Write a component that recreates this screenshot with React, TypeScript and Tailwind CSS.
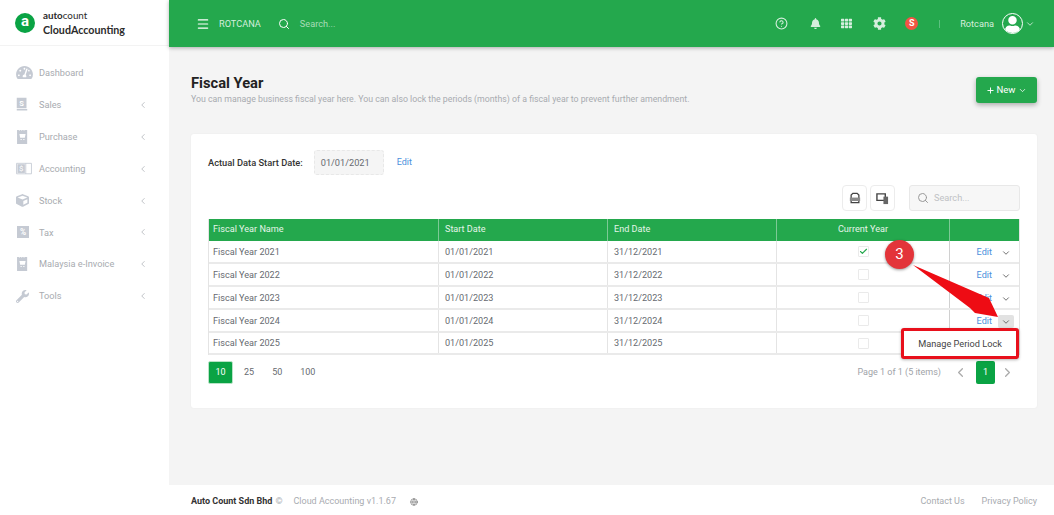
import { ChevronDown, ChevronLeft, ChevronRight, Check, CircleHelp, Globe, Menu, Plus, Search } from "lucide-react";
import { FaBell, FaCog, FaCube, FaTachometerAlt, FaTh, FaUser, FaWrench } from "react-icons/fa";

const SalesIcon = () => (
  <svg viewBox="0 0 16 18" className="w-[12px] h-[15px]">
    <path d="M1 0h13v14H1z" fill="#c5cad3" />
    <path d="M1 15h14v2H1z" fill="#c5cad3" />
    <text x="7.5" y="11" fontSize="10" fontWeight="700" textAnchor="middle" fill="#fff" fontFamily="Roboto, sans-serif">S</text>
  </svg>
);

const ReceiptIcon = () => (
  <svg viewBox="0 0 14 18" className="w-[11px] h-[14px] ml-[1px]">
    <path d="M0 0h2l1 1 1-1h1l1 1 1-1h1l1 1 1-1h1l2 0v18H0z" fill="#c5cad3" />
    <path d="M3 5h8l-1 5H4zM4.500 11.500h1.500v1.500H4.500zM8 11.500h1.500v1.500H8z" fill="#fff" />
  </svg>
);

const AccountingIcon = () => (
  <svg viewBox="0 0 18 16" className="w-[16px] h-[14px]" fill="none" stroke="#c5cad3">
    <path d="M.5 1.500h17v12H.5zM11 1.500v12" strokeWidth="1" />
    <path d="M1.500 2.500h8.500v10H1.500z" fill="#c5cad3" stroke="none" />
    <text x="5.700" y="10.500" fontSize="9" textAnchor="middle" fill="#fff" stroke="none" fontFamily="Roboto, sans-serif">$</text>
  </svg>
);

const TaxIcon = () => (
  <svg viewBox="0 0 13 13" className="w-[12px] h-[12px] ml-[1px]">
    <path d="M0 0h13v13H0z" fill="#c5cad3" />
    <text x="6.500" y="10" fontSize="9" fontWeight="700" textAnchor="middle" fill="#fff" fontFamily="Roboto, sans-serif">%</text>
  </svg>
);

const navItems = [
  { label: "Dashboard", icon: <FaTachometerAlt className="w-[17px] h-[15px] text-[#c5cad3]" /> },
  { label: "Sales", icon: <SalesIcon />, arrow: true },
  { label: "Purchase", icon: <ReceiptIcon />, arrow: true },
  { label: "Accounting", icon: <AccountingIcon />, arrow: true },
  { label: "Stock", icon: <FaCube className="w-[13px] h-[13px] text-[#c5cad3]" />, arrow: true },
  { label: "Tax", icon: <TaxIcon />, arrow: true },
  { label: "Malaysia e-Invoice", icon: <ReceiptIcon />, arrow: true },
  { label: "Tools", icon: <FaWrench className="w-[13px] h-[13px] text-[#c5cad3]" />, arrow: true },
];

const rows = [
  { name: "Fiscal Year 2021", start: "01/01/2021", end: "31/12/2021", current: true, h: "h-[23px]" },
  { name: "Fiscal Year 2022", start: "01/01/2022", end: "31/12/2022", h: "h-[23px]" },
  { name: "Fiscal Year 2023", start: "01/01/2023", end: "31/12/2023", h: "h-[23px]" },
  { name: "Fiscal Year 2024", start: "01/01/2024", end: "31/12/2024", open: true, h: "h-[23px]" },
  { name: "Fiscal Year 2025", start: "01/01/2025", end: "31/12/2025", noAction: true, h: "h-[22px]" },
];

const Sidebar = () => (
  <aside className="w-[169px] shrink-0 bg-white flex flex-col">
    <div className="h-[46px] border-b border-[#f3f3f3] flex items-center pl-[15px] gap-[8px]">
      <div className="w-[20px] h-[20px] rounded-full bg-[#0aa344] flex items-center justify-center text-white text-[15px] font-bold leading-none pb-[2px]">a</div>
      <div className="text-[#2b2b2b] leading-none">
        <div className="text-[9.800px] font-['Lato',sans-serif] font-bold leading-[10px] mb-[3px]">
          auto<span className="font-normal">count</span>
        </div>
        <div className="text-[10.700px] font-bold font-['Lato',sans-serif] leading-[13px]">CloudAccounting</div>
      </div>
    </div>
    <nav className="pt-[11px]">
      {navItems.map((item) => (
        <div key={item.label} className="h-[31.900px] flex items-center pl-[16px] pr-[21px] text-[#a8abb0] text-[9.200px]">
          <span className="w-[23px] shrink-0 flex">{item.icon}</span>
          <span className="flex-1">{item.label}</span>
          {item.arrow && <ChevronLeft className="w-[10px] h-[10px] text-[#b5b8bd]" />}
        </div>
      ))}
    </nav>
  </aside>
);

const Topbar = () => (
  <header className="h-[47px] shrink-0 bg-[#24a84d] shadow-[0_1px_4px_rgba(0,0,0,0.3)] flex items-center text-[#d5eedd] text-[9.200px] pl-[27px] pr-[19px] relative z-10">
    <Menu className="w-[14px] h-[14px] text-white" />
    <span className="ml-[9px]">ROTCANA</span>
    <Search className="w-[12px] h-[12px] ml-[17px] text-white" />
    <span className="ml-[10px] text-[#a8dcb8]">Search...</span>
    <div className="ml-auto flex items-center">
      <CircleHelp className="w-[13px] h-[13px]" />
      <FaBell className="w-[11px] h-[11px] ml-[22px]" />
      <FaTh className="w-[11px] h-[11px] ml-[20px]" />
      <FaCog className="w-[13px] h-[13px] ml-[21px]" />
      <div className="w-[13px] h-[13px] ml-[19px] rounded-full bg-[#f25444] text-white text-[9px] font-bold flex items-center justify-center">S</div>
      <div className="w-px h-[8px] ml-[21px] bg-[#5cc080]" />
      <span className="ml-[20px]">Rotcana</span>
      <div className="w-[21px] h-[21px] ml-[8px] rounded-full border border-white bg-[#24a84d] overflow-hidden flex items-end justify-center">
        <FaUser className="w-[17px] h-[17px] text-white" />
      </div>
      <ChevronDown className="w-[10px] h-[10px] ml-[2px]" />
    </div>
  </header>
);

const FiscalTable = () => (
  <div className="mt-[8px] border-x border-[#e4e4e4] text-[9.100px] text-[#666a70]">
    <div className="h-[22px] bg-[#24a84d] text-[#e4f5e9] flex">
      <div className="w-[230px] pl-[4px] flex items-center border-r border-[#7dc996]">Fiscal Year Name</div>
      <div className="w-[169px] pl-[6px] flex items-center border-r border-[#7dc996]">Start Date</div>
      <div className="w-[169px] pl-[6px] flex items-center border-r border-[#7dc996]">End Date</div>
      <div className="w-[173px] flex items-center justify-center border-r border-[#7dc996]">Current Year</div>
      <div className="flex-1" />
    </div>
    {rows.map((row) => (
      <div key={row.name} className={`${row.h} flex border-b-2 border-[#eaeaea]`}>
        <div className="w-[230px] pl-[4px] pt-[2px] flex items-center border-r border-[#e4e4e4]">{row.name}</div>
        <div className="w-[169px] pl-[6px] pt-[2px] flex items-center border-r border-[#e4e4e4]">{row.start}</div>
        <div className="w-[169px] pl-[6px] pt-[2px] flex items-center border-r border-[#e4e4e4]">{row.end}</div>
        <div className="w-[173px] flex items-center justify-center border-r border-[#d0d0d0]">
          <div className="w-[11px] h-[11px] border border-[#eaeaea] rounded-[1px] flex items-center justify-center">
            {row.current && <Check className="w-[9px] h-[9px] text-[#24a84d]" strokeWidth={3} />}
          </div>
        </div>
        {!row.noAction && (
          <div className="flex-1 flex items-center justify-end pr-[5px] pt-[2px]">
            <span className="text-[#4a8fdc] mr-[6px]">Edit</span>
            <div className={`w-[16px] h-[13px] rounded-[2px] flex items-center justify-center ${row.open ? "bg-[#e2e2e2]" : ""}`}>
              <ChevronDown className="w-[10px] h-[10px] text-[#555]" />
            </div>
          </div>
        )}
      </div>
    ))}
  </div>
);

const App = () => {
  return (
    <div className="relative w-[1054px] h-[515px] overflow-hidden flex bg-[#f4f4f4] font-['Roboto',sans-serif]">
      <Sidebar />
      <div className="flex-1 flex flex-col min-w-0">
        <Topbar />
        <main className="flex-1 pl-[22px] pr-[17px] pt-[27px]">
          <div className="flex items-start justify-between">
            <div>
              <h1 className="text-[14.700px] font-bold text-[#222] leading-[18px]">Fiscal Year</h1>
              <p className="text-[8.750px] text-[#a8abb0] leading-[13px] mt-[1px]">
                You can manage business fiscal year here. You can also lock the periods (months) of a fiscal year to prevent further amendment.
              </p>
            </div>
            <button className="mt-[3px] w-[61px] h-[26px] rounded-[3px] bg-[#24a84d] text-white text-[9.500px] shadow-[0_2px_5px_rgba(0,0,0,0.3)] flex items-center justify-center gap-[2px]">
              <Plus className="w-[9px] h-[9px]" strokeWidth={2.500} />
              New
              <ChevronDown className="w-[9px] h-[9px] ml-[1px]" />
            </button>
          </div>

          <section className="mt-[28px] h-[274px] bg-white rounded-[3px] px-[17px] pt-[16px] shadow-[0_0_2px_rgba(0,0,0,0.05)]">
            <div className="flex items-center">
              <span className="text-[9.300px] font-medium text-[#333]">Actual Data Start Date:</span>
              <div className="ml-[11px] w-[70px] h-[25px] bg-[#f5f5f5] border border-dashed border-[#e8e8e8] rounded-[3px] flex items-center pl-[6px] text-[9.200px] text-[#666a70]">01/01/2021</div>
              <span className="ml-[13px] text-[9px] text-[#4a8fdc]">Edit</span>
            </div>
            <div className="mt-[10px] flex justify-end items-center">
              <button className="w-[25px] h-[26px] border border-[#ececec] rounded-[4px] flex items-center justify-center">
                <svg viewBox="0 0 14 14" className="w-[12px] h-[12px]">
                  <path d="M2.500 7V3.500L4.500 1.500H9.500L11.500 3.500V7M2.500 10V12.500H11.500V10" fill="none" stroke="#444" strokeWidth="1.500" />
                  <path d="M1 6.500h12v4H1z" fill="#8a8a8a" />
                </svg>
              </button>
              <button className="ml-[3px] w-[25px] h-[26px] border border-[#ececec] rounded-[4px] flex items-center justify-center">
                <svg viewBox="0 0 14 14" className="w-[13px] h-[13px]">
                  <path d="M1 2h9v7H1z" fill="none" stroke="#444" strokeWidth="1.500" />
                  <path d="M8 5h5v8H8z" fill="#666" />
                </svg>
              </button>
              <div className="ml-[14px] w-[111px] h-[26px] bg-[#f7f7f7] border border-[#e8e8e8] rounded-[3px] flex items-center pl-[7px] text-[9.200px] text-[#c0c2c5]">
                <Search className="w-[12px] h-[12px] text-[#999]" />
                <span className="ml-[5px]">Search...</span>
              </div>
            </div>
            <FiscalTable />
            <div className="mt-[6px] flex items-center text-[9px] text-[#666a70]">
              <div className="w-[25px] h-[23px] bg-[#0aa344] border border-[#b8e3c6] rounded-[2px] text-white flex items-center justify-center">10</div>
              <span className="ml-[11px]">25</span>
              <span className="ml-[18px]">50</span>
              <span className="ml-[18px]">100</span>
              <span className="ml-auto text-[#a0a3a8]">Page 1 of 1 (5 items)</span>
              <ChevronLeft className="ml-[12px] w-[15px] h-[15px] text-[#aaa]" />
              <div className="ml-[8px] w-[19px] h-[23px] bg-[#0aa344] rounded-[2px] text-white flex items-center justify-center">1</div>
              <ChevronRight className="ml-[5px] mr-[5px] w-[15px] h-[15px] text-[#aaa]" />
            </div>
          </section>
        </main>
        <footer className="h-[30px] shrink-0 bg-white pl-[22px] pr-[17px] pt-[4px] flex items-center text-[9px] text-[#a8abb0]">
          <span className="font-bold text-[#333]">Auto Count Sdn Bhd</span>
          <span className="ml-[3px]">©</span>
          <span className="ml-[11px]">Cloud Accounting v1.1.67</span>
          <Globe className="ml-[14px] w-[8px] h-[8px] text-[#777]" />
          <span className="ml-auto">Contact Us</span>
          <span className="ml-[17px]">Privacy Policy</span>
        </footer>
      </div>

      {/* Dropdown and annotation over the table */}
      <div className="absolute left-[901px] top-[328px] w-[118px] h-[31px] bg-white rounded-[3px] border-[3px] border-[#e8101c] shadow-[0_1px_3px_rgba(0,0,0,0.3)] flex items-center justify-center text-[9.200px] text-[#444]">
        Manage Period Lock
      </div>
      <svg className="absolute left-[910px] top-[262px] w-[100px] h-[70px]" viewBox="0 0 100 70">
        <path d="M3 3 L72 33 L79 36 L88 55 L65 51 L60 46 Z" fill="#ee0c14" />
      </svg>
      <div className="absolute left-[885px] top-[240px] w-[29px] h-[29px] rounded-full bg-[#e3343a] shadow-[0_1px_3px_rgba(0,0,0,0.4)] text-white text-[15px] flex items-center justify-center">3</div>
    </div>
  );
};

export default App;
